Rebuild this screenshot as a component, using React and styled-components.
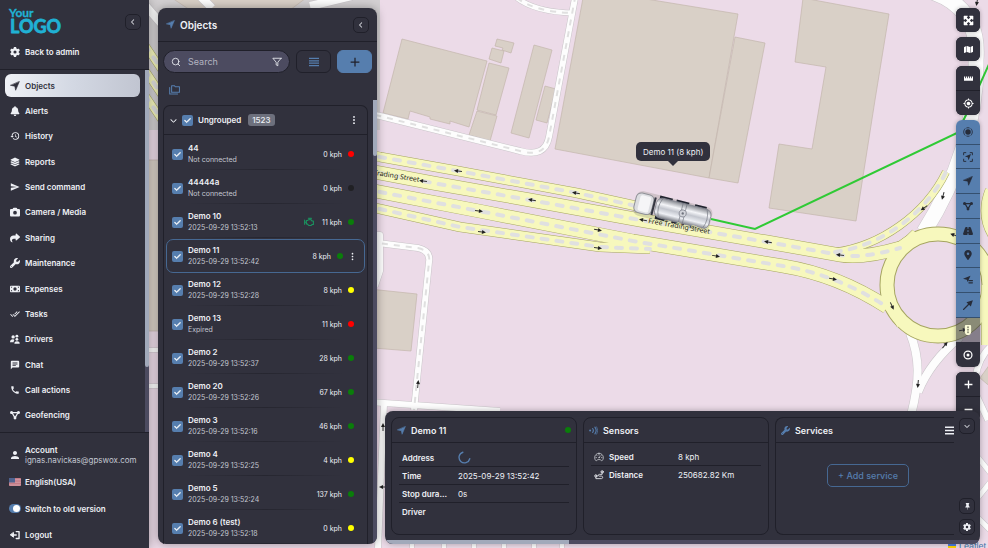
import React from "react";
import styled, { createGlobalStyle, css } from "styled-components";
import {
  FaBell, FaCamera, FaChevronDown, FaChevronLeft, FaCheck, FaGear, FaLayerGroup,
  FaLocationDot, FaMap, FaMaximize, FaMoneyBill, FaRoad, FaShare,
  FaTrafficLight, FaWrench,
} from "react-icons/fa6";
import { MdChat, MdDoneAll, MdHistory, MdMyLocation, MdPerson, MdSend, MdCall } from "react-icons/md";
import { FiFilter, FiSearch } from "react-icons/fi";
import { BsPinFill, BsThreeDotsVertical } from "react-icons/bs";
import { IoSpeedometerOutline } from "react-icons/io5";

const c = {
  panel: "#31313d",
  line: "#20202a",
  blue: "#567eae",
  field: "#4c4b60",
  text: "#eef0f5",
  soft: "#c3c7d1",
  thumb: "#a1a9ba",
};

const Global = createGlobalStyle`
  * { box-sizing: border-box; }
  body { margin: 0; font-family: Inter, sans-serif; font-size: 8px; color: ${c.text}; }
  button, input { font: inherit; color: inherit; }
  button { padding: 0; border: 0; background: none; cursor: pointer; }
  h2, p, dl, dd, dt, ul { margin: 0; padding: 0; }
  ul { list-style: none; }
  a { color: inherit; text-decoration: none; }
  svg { display: block; flex: none; }
`;

/* ---------- small drawings ---------- */

const Icon = ({ size = 10, children, box = 16 }) => (
  <svg width={size} height={size} viewBox={`0 0 ${box} ${box}`} fill="none" stroke="currentColor" strokeWidth="1.6" strokeLinecap="round" strokeLinejoin="round" aria-hidden="true">
    {children}
  </svg>
);

const CompassArrow = (p) => (
  <Icon {...p}><path fill="currentColor" strokeWidth="1" d="M14.800 1.200 9 14.800 7.700 8.300 1.200 7z" /></Icon>
);
const GeofenceIcon = (p) => (
  <Icon {...p}>
    <path strokeWidth="2" d="M3 4h10L8 12.500z" />
    <g fill="currentColor" stroke="none">
      <circle cx="2.500" cy="4" r="2.500" /><circle cx="13.500" cy="4" r="2.500" /><circle cx="8" cy="12.800" r="2.300" />
    </g>
  </Icon>
);
const DriversIcon = (p) => (
  <Icon {...p}>
    <g fill="currentColor" stroke="none">
      <circle cx="5" cy="4.600" r="2.700" /><circle cx="11" cy="3.400" r="2.300" />
      <path d="M0 13c0-3 2-4.600 4.500-4.600 1.300 0 2 .4 2.600 1-1 1-1.300 2.200-1.300 3.600z" />
      <circle cx="11" cy="8.500" r="2.200" /><path d="M7 15.500c0-3 1.700-4 4.200-4s4.300 1 4.300 4z" />
    </g>
  </Icon>
);
const LogoutIcon = (p) => (
  <Icon {...p}>
    <path strokeWidth="2.200" d="M10 2.500h4.500v11H10M10 8H2" />
    <path fill="currentColor" d="M5.500 4.500v7L1 8z" />
  </Icon>
);
const FoldersIcon = (p) => (
  <Icon {...p}>
    <path strokeWidth="1.500" d="M3.800 2.500h4l1.500 1.600h5.900v8H3.800zM1 5v9.500h11.500" />
  </Icon>
);
const EngineIcon = (p) => (
  <Icon {...p}>
    <path strokeWidth="1.700" d="M1 5v6.500M1 8.300h2.800M3.800 5.500h2L7 4.500h4.500L13 6.500h2v5.500h-2l-1.500 1.500H7.500L5 11H3.800zM7 2h5M9.500 2v2.500" />
  </Icon>
);
const WavesIcon = (p) => (
  <Icon {...p}>
    <circle cx="2" cy="8" r="1.800" fill="currentColor" stroke="none" />
    <path strokeWidth="2" d="M6.500 4.500c1.600 2.300 1.600 4.700 0 7M10.500 2c3 4 3 8 0 12" /><path strokeWidth="1.200" d="M13.500 1.500c2.500 4.300 2.500 8.700 0 13" />
  </Icon>
);
const DistanceIcon = (p) => (
  <Icon {...p}>
    <circle cx="13" cy="3" r="1.800" /><circle cx="3" cy="9.500" r="1.800" />
    <path strokeWidth="1.300" d="M13 5v2H8.500c-2 0-2 2.800 0 2.800H12c2.500 0 2.500 4 0 4H3v-2" />
  </Icon>
);
const LinesIcon = ({ rows = 4, ...p }) => (
  <Icon {...p}>
    {Array.from({ length: rows }, (_, i) => (
      <path key={i} strokeLinecap="butt" strokeWidth={rows === 3 ? 2.4 : 1.9} d={`M0 ${2.2 + (i * 11.6) / (rows - 1)}h16`} />
    ))}
  </Icon>
);
const RulerIcon = (p) => (
  <Icon {...p}>
    <path fill="currentColor" stroke="none" d="M0 4.500h2v3h1.400v-3h2v3h1.400v-3h2.400v3h1.400v-3h2v3H14v-3h2V12H0z" />
  </Icon>
);
const PulseIcon = (p) => (
  <Icon {...p}>
    <circle cx="8" cy="8" r="4.400" fill="currentColor" stroke="none" />
    <path d="M3.200 2.800c-2.900 3-2.900 7.400 0 10.400M12.800 2.800c2.900 3 2.900 7.400 0 10.400M6 1.400c1.200-.4 2.800-.4 4 0M6 14.600c1.200.4 2.800.4 4 0" strokeWidth="1.400" />
  </Icon>
);
const FocusIcon = (p) => (
  <Icon {...p}>
    <path strokeWidth="1.500" d="M1 4.500V1h3.500M11.500 1H15v3.500M15 11.500V15h-3.500M4.500 15H1v-3.500" />
    <path fill="currentColor" stroke="none" d="M12.800 3.200 9 13 7.500 8.500 3 7.300z" />
  </Icon>
);
const ArrowListIcon = (p) => (
  <Icon {...p}>
    <path fill="currentColor" stroke="none" d="M12 1 7.500 11 6 7.500 0 6z" />
    <path d="M9.500 9H15M9.500 12.500H15" strokeWidth="2" />
  </Icon>
);
const LongArrowIcon = (p) => (
  <Icon {...p}>
    <path strokeWidth="2.200" d="M1 15 10 6" /><path fill="currentColor" stroke="none" d="M15.800.2 12.500 10.500 5.500 3.500z" />
  </Icon>
);
const TargetIcon = (p) => (
  <Icon {...p}><circle cx="8" cy="8" r="6.300" strokeWidth="2" /><circle cx="8" cy="8" r="2.400" fill="currentColor" stroke="none" /></Icon>
);
const PlusIcon = ({ weight = 2, ...p }) => <Icon {...p}><path strokeLinecap="butt" strokeWidth={weight} d="M8 1v14M1 8h14" /></Icon>;
const MinusIcon = (p) => <Icon {...p}><path strokeLinecap="butt" strokeWidth="2.400" d="M1 8h14" /></Icon>;
const SpinnerIcon = (p) => <Icon {...p}><path stroke={c.blue} strokeWidth="1.700" d="M6 1.500A6.700 6.700 0 1 0 14.500 9.500" /></Icon>;

const Flag = () => (
  <svg width="12" height="8" viewBox="0 0 12 8" aria-hidden="true">
    <rect width="12" height="8" rx="1" fill="#d8a7b0" />
    <path d="M0 .6h12M0 2.200h12M0 3.800h12M0 5.400h12M0 7h12" stroke="#b9626f" strokeWidth=".7" />
    <rect width="6" height="4.500" fill="#4f6390" />
  </svg>
);

const LogoSvg = styled.svg`overflow: visible;`;
const Logo = () => (
  <LogoSvg width="56" height="28" viewBox="0 0 56 28" role="img" aria-label="Your Logo">
    <g fill="#20b1d4" stroke="#20b1d4" strokeLinejoin="round" fontFamily="Lato, sans-serif" fontWeight="700">
      <text x="1" y="9" fontSize="12" strokeWidth=".3">Your</text>
      <text x="2" y="25" fontSize="18" strokeWidth=".8">LOGO</text>
    </g>
  </LogoSvg>
);

/* ---------- map ---------- */

const MapSvg = styled.svg`
  position: absolute;
  inset: 0;
  width: 100%;
  height: 100%;
  background: #ecdbe8;
`;

const buildings = [
  "402,39 487,61 469,127 450,121 450,124 430,119 430,117 410,111 408,119 383,113",
  "489,63 509,68 496,115 477,110",
  "477,111 497,116 490,141 469,135",
  "497,39 514,43 511,53 502,50 503,48 495,46",
  "492,48 504,51 501,63 489,59",
  "534,45 552,50 529,138 511,133",
  "545,86 556,89 547,123 536,120",
  "583,-2 640,-2 738,14 709,178 555,149",
  "735,37 765,43 738,183 709,178",
  "803,-2 889,14 875,100 856,221 769,208 779,144 812,149 826,67 795,62",
  "360,288 417,294 411,351 360,347",
  "140,160 160,160 160,331 140,331",
  "172,-2 306,-2 290,10 190,10",
  "1000,350 980,378 1000,395",
];
const whiteRoads = [
  ["M340 108 380 116 520 151Q545 158 549 137L575-2", 6],
  ["M517-2Q535 12 573 13", 5],
  ["M370 242 418 248Q431 251 429 262L414 410", 6],
  ["M377 235h3v36l-5 15", 6],
  ["M370 402 500 411", 6],
  ["M384 404 378 548", 6],
  ["M910 333C920 358 920 380 911 415", 8],
  ["M960 337Q930 362 918 392", 8],
  ["M932-8Q980 8 976 60C977 120 957 180 924 232", 15],
  ["M1000 340Q976 352 974 390L988 420", 6],
  ["M976 455 1000 485M976 500 1000 470M970 510 1000 540", 5],
  ["M145 5 165 28M200-4 212 8M310 6 352-4", 8],
  ["M145 350h14M145 386h14", 4],
  ["M412 542v8M444 542v8M474 542v8M504 542v8M534 542v8M562 542v8", 4],
];
const yellowRoads = [
  ["M145 45 165 75M145 70 165 100M145 95 165 125", 7, true],
  ["M350 203 380 209 460 227 600 247 650 249", 9, true],
  ["M350 186 380 192 479 211 633 241 783 266Q838 275 887 307", 13, true],
  ["M350 150 380 157 458 171 577 193 650 209", 9, true],
  ["M835 252C880 246 925 215 946 172", 7, true],
  ["M350 168 380 173 433 183 530 200 640 220 767 242 840 255Q862 259 900 248", 13, true],
  ["M990 190Q978 220 1000 245", 9, false],
  ["M880 253Q903 246 915 232", 6, false],
  ["M883 302Q893 310 901 325", 8, false],
];
const arrows = [
  [458, 171, 186], [576, 193, 190], [423, 181, 188], [643, 220, 190], [768, 242, 190], [840, 255, 186],
  [479, 211, 8], [532, 200, 190], [598, 230, 10], [482, 232, 8], [598, 248, 6], [716, 256, 9], [833, 279, 10],
  [924, 208, 145], [943, 196, 105], [954, 235, 200], [892, 306, 65], [918, 384, 95], [945, 345, -50],
  [383, 427, 270], [418, 384, 275], [383, 487, 180], [977, 2, 100], [963, 330, -10],
];

const Building = styled.polygon`fill: #d9d0c7; stroke: #c3b6ac; stroke-width: 0.7;`;
const Road = styled.path`fill: none; stroke: ${(p) => p.$tone}; stroke-width: ${(p) => p.$w}; stroke-linejoin: round;`;
const Dashes = styled.path`
  fill: none;
  stroke: #e0e0e0;
  stroke-width: ${(p) => p.$w};
  stroke-dasharray: ${(p) => (p.$w > 3 ? "6 9" : "6 6")};
  stroke-linecap: ${(p) => (p.$w > 3 ? "round" : "butt")};
`;
const StreetName = styled.text`font: 7px "Noto Sans", sans-serif; fill: #222; stroke: #f7f8bd; stroke-width: 1; paint-order: stroke;`;

const Truck = () => (
  <g transform="translate(673 211) rotate(14)">
    <defs>
      <linearGradient id="tank" x1="0" y1="0" x2="0" y2="1">
        <stop offset="0" stopColor="#85888f" /><stop offset=".3" stopColor="#f4f5f8" />
        <stop offset=".5" stopColor="#c3c6ce" /><stop offset=".75" stopColor="#eef0f5" /><stop offset="1" stopColor="#7a7d85" />
      </linearGradient>
    </defs>
    <rect x="-39" y="-12" width="78" height="25" rx="6" fill="#776" opacity=".25" />
    <rect x="-39" y="-10" width="18" height="20" rx="5" fill="#dcdde1" stroke="#8f9197" />
    <rect x="-35" y="-8" width="11" height="16" rx="2" fill="#f5f5f7" />
    <path d="M-20-9v18" stroke="#333641" strokeWidth="2" />
    <path d="M-16-10.500h13M1-10.500h13M20-10.500h12M-16 10.500h13M1 10.500h13M20 10.500h12" stroke="#20232e" strokeWidth="3" />
    <rect x="-18" y="-10" width="56" height="20" rx="6" fill="url(#tank)" stroke="#858892" strokeWidth=".8" />
    <path d="M-13-9q-4 9 0 18M8-10v20M12-10v20M33-9q4 9 0 18" fill="none" stroke="#70737e" strokeWidth=".6" />
    <circle cx="10" cy="0" r="3.500" fill="#d2d4da" stroke="#7f828d" strokeWidth=".8" /><circle cx="10" cy="0" r="1.200" fill="#70737e" />
  </g>
);

const MapCanvas = () => (
  <MapSvg role="img" aria-label="Map">
    <rect x="140" y="0" width="240" height="130" fill="#d3d0d2" />
    {buildings.map((b) => <Building key={b} points={b} />)}
    {whiteRoads.map(([d, w]) => <Road key={d} d={d} $w={w + 1} $tone="#c9c5c9" />)}
    {whiteRoads.map(([d, w]) => <Road key={d} d={d} $w={w} $tone="#fdfdfd" />)}
    {whiteRoads.slice(0, 3).map(([d]) => <Dashes key={d} d={d} $w={2} />)}
    {yellowRoads.map(([d, w]) => <Road key={d} d={d} $w={w + 1} $tone="#a5a560" />)}
    <circle cx="938" cy="285" r="51" fill="none" stroke="#a5a560" strokeWidth="15" />
    <Road d="M988 285V345" $w={14} $tone="#a5a560" />
    <Road d="M988 285V345" $w={13} $tone="#f7f8bd" />
    {yellowRoads.map(([d, w]) => <Road key={d} d={d} $w={w} $tone="#f7f8bd" />)}
    <circle cx="938" cy="285" r="51" fill="none" stroke="#f7f8bd" strokeWidth="13" />
    {yellowRoads.filter((r) => r[2]).map(([d]) => <Dashes key={d} d={d} $w={4} />)}
    {arrows.map(([x, y, a]) => (
      <g key={`${x}-${y}`} transform={`translate(${x} ${y}) rotate(${a})`}>
        <path d="M-4 0H2" stroke="#333" strokeWidth="1" /><path d="M4 0 0-2v4z" fill="#222" />
      </g>
    ))}
    <StreetName transform="translate(419 182) rotate(9)" textAnchor="end">Free Trading Street</StreetName>
    <path d="M711 219 755 229 957 133 966 115 990 62" fill="none" stroke="#2fca35" strokeWidth="2" />
    <Truck />
    <StreetName transform="translate(648 223) rotate(10)">Free Trading Street</StreetName>
  </MapSvg>
);

const Marker = styled.div`
  position: absolute;
  left: 636px;
  top: 142px;
  height: 19px;
  padding: 0 7px;
  display: grid;
  place-items: center;
  border-radius: 5px;
  background: ${c.panel};
  font-size: 8px;
  white-space: nowrap;
  &::after {
    content: "";
    position: absolute;
    top: 100%;
    left: 50%;
    border: 5px solid transparent;
    border-top-color: ${c.panel};
    border-bottom: 0;
    transform: translateX(-50%);
  }
`;
const Attribution = styled.a`
  position: absolute;
  right: 2px;
  bottom: -4px;
  display: flex;
  align-items: center;
  gap: 3px;
  color: #3d76a8;
  font: 9px/11px "Liberation Sans", sans-serif;
  &::before { content: ""; width: 8px; height: 7px; background: linear-gradient(#4c7be1 50%, #ffd500 50%); }
`;

/* ---------- shell ---------- */

const Shell = styled.div`
  position: relative;
  height: 100vh;
  overflow: hidden;
  display: flex;
`;
const Workspace = styled.main`
  position: relative;
  flex: 1;
  min-width: 0;
  display: flex;
  gap: 8px;
  padding: 8px 8px 4px 9px;
`;
const RightSide = styled.div`
  flex: 1;
  min-width: 0;
  display: flex;
  flex-direction: column;
`;

/* ---------- sidebar ---------- */

const Sidebar = styled.aside`
  position: relative;
  width: 149px;
  flex: none;
  display: flex;
  flex-direction: column;
  background: ${c.panel};
  box-shadow: 0 0 10px rgba(0, 0, 0, 0.35);
  font-weight: 600;
`;
const SidebarHead = styled.header`
  height: 70px;
  padding: 8px 8px 0;
  border-bottom: 1px solid ${c.line};
`;
const LogoRow = styled.div`display: flex; justify-content: space-between; align-items: center;`;
const OutlineButton = styled.button`
  width: 16px;
  height: 16px;
  display: grid;
  place-items: center;
  border: 1px solid ${c.line};
  border-radius: 5px;
  color: ${c.text};
`;
const NavLink = styled.a`
  display: flex;
  align-items: center;
  gap: 5px;
  height: 23px;
  padding: 0 5px;
  border-radius: 6px;
  white-space: nowrap;
  svg { width: 10px; height: 10px; }
  ${(p) => p.$active && css`
    color: ${c.panel};
    background: linear-gradient(90deg, #eff1f6, #d3d8e3 50%, #c1c5d1);
  `}
`;
const HeadLink = styled(NavLink)`margin: 4px 0 0; padding: 0 2px;`;
const NavArea = styled.div`flex: 1; min-height: 0; display: flex;`;
const NavList = styled.ul`
  flex: 1;
  display: grid;
  grid-auto-rows: minmax(23px, 1fr);
  align-items: center;
  padding: 3px 5px 4px;
  overflow: hidden;
`;
const ScrollTrack = styled.div`width: 4px; background: ${c.field};`;
const ScrollThumb = styled.div`height: ${(p) => p.$size}; background: ${c.thumb}; border-radius: 0 0 2px 2px;`;
const SidebarFoot = styled.footer`
  padding: 9px 9px 0;
  border-top: 1px solid ${c.line};
  display: flex;
  flex-direction: column;
`;
const FootLink = styled.a`
  display: flex;
  align-items: center;
  gap: 4px;
  height: ${(p) => p.$h};
  > :first-child { width: 12px; }
`;
const Email = styled.span`display: block; font-weight: 400; color: ${c.soft};`;
const Stack = styled.span`display: block; line-height: 10px;`;
const SwitchLabel = styled(FootLink).attrs({ as: "label" })``;
const Toggle = styled.input.attrs({ type: "checkbox", role: "switch" })`
  appearance: none;
  width: 13px;
  height: 9px;
  margin: 0;
  padding: 1px;
  border-radius: 5px;
  background: ${c.blue};
  display: flex;
  justify-content: flex-end;
  &::before { content: ""; width: 7px; height: 7px; border-radius: 50%; background: #fff; }
`;

const navItems = [
  ["Objects", <CompassArrow />], ["Alerts", <FaBell />], ["History", <MdHistory />],
  ["Reports", <FaLayerGroup />], ["Send command", <MdSend />], ["Camera / Media", <FaCamera />],
  ["Sharing", <FaShare />], ["Maintenance", <FaWrench />], ["Expenses", <FaMoneyBill />],
  ["Tasks", <MdDoneAll />], ["Drivers", <DriversIcon />], ["Chat", <MdChat />],
  ["Call actions", <MdCall />], ["Geofencing", <GeofenceIcon />],
];

const SideNav = () => (
  <Sidebar>
    <SidebarHead>
      <LogoRow>
        <Logo />
        <OutlineButton aria-label="Collapse menu"><FaChevronLeft size={6} /></OutlineButton>
      </LogoRow>
      <HeadLink href="#admin"><FaGear />Back to admin</HeadLink>
    </SidebarHead>
    <NavArea>
      <NavList>
        {navItems.map(([name, icon], i) => (
          <li key={name}><NavLink href="#" $active={i === 0}>{icon}{name}</NavLink></li>
        ))}
      </NavList>
      <ScrollTrack><ScrollThumb $size="82%" /></ScrollTrack>
    </NavArea>
    <SidebarFoot>
      <FootLink href="#account" $h="26px"><MdPerson size={12} /><Stack>Account<Email>ignas.navickas@gpswox.com</Email></Stack></FootLink>
      <FootLink href="#language" $h="27px"><Flag />English(USA)</FootLink>
      <SwitchLabel $h="27px"><Toggle defaultChecked />Switch to old version</SwitchLabel>
      <FootLink href="#logout" $h="26px"><LogoutIcon size={10} />Logout</FootLink>
    </SidebarFoot>
  </Sidebar>
);

/* ---------- objects panel ---------- */

const Panel = styled.section`
  width: 219px;
  flex: none;
  display: flex;
  flex-direction: column;
  overflow: hidden;
  border-radius: 8px;
  background: ${c.panel};
  box-shadow: 0 0 10px rgba(0, 0, 0, 0.35);
`;
const PanelHead = styled.header`
  height: 34px;
  flex: none;
  display: flex;
  align-items: center;
  gap: 5px;
  padding: 0 8px;
  border-bottom: 1px solid ${c.line};
  > svg { color: ${c.blue}; }
  > button { margin-left: auto; }
`;
const Title = styled.h2`font-size: ${(p) => p.$size}; font-weight: 600;`;
const Tools = styled.div`display: flex; gap: 6px; padding: 8px 5px 0;`;
const SearchBox = styled.label`
  flex: 1;
  min-width: 0;
  display: flex;
  align-items: center;
  gap: 7px;
  height: 23px;
  padding: 0 7px;
  border: 1px solid ${c.line};
  border-radius: 12px;
  background: ${c.field};
`;
const SearchInput = styled.input`
  flex: 1;
  min-width: 0;
  padding: 0;
  border: 0;
  outline: 0;
  background: none;
  font-size: 9px;
  &::placeholder { color: #b3b4c2; }
`;
const ToolButton = styled.button`
  width: 35px;
  height: 23px;
  display: grid;
  place-items: center;
  border-radius: 6px;
  border: 1px solid ${(p) => (p.$solid ? c.blue : c.line)};
  background: ${(p) => (p.$solid ? c.blue : "none")};
  color: ${(p) => (p.$solid ? c.line : c.blue)};
`;
const PlainButton = styled.button`display: grid; place-items: center; color: ${(p) => p.$tone || c.text};`;
const FolderRow = styled.div`height: 27px; flex: none; padding: 5px 11px 0; display: flex; align-items: center;`;
const ListArea = styled.div`flex: 1; min-height: 0; display: flex; gap: 5px; padding-left: 5px;`;
const Group = styled.div`
  flex: 1;
  min-width: 0;
  margin-top: 5px;
  border: 1px solid ${c.line};
  border-bottom: 0;
  border-radius: 7px 7px 0 0;
  overflow: hidden;
`;
const GroupHead = styled.div`
  height: 29px;
  display: flex;
  align-items: center;
  gap: 5px;
  padding: 0 8px 0 6px;
  border-bottom: 1px solid ${c.line};
  font-weight: 600;
  > :last-child { margin-left: auto; }
`;
const Count = styled.span`
  margin-left: 2px;
  padding: 0 4px;
  border-radius: 3px;
  background: #6d707d;
  font-weight: 500;
  line-height: 12px;
`;
const CheckWrap = styled.span`display: grid; place-items: center; > * { grid-area: 1 / 1; } svg { pointer-events: none; }`;
const CheckInput = styled.input.attrs({ type: "checkbox" })`
  appearance: none;
  width: 11px;
  height: 11px;
  margin: 0;
  border-radius: 2px;
  background: ${c.blue};
`;
const Check = ({ label }) => (
  <CheckWrap><CheckInput defaultChecked aria-label={label} /><FaCheck size={7} color="#fff" stroke="#fff" strokeWidth="40" /></CheckWrap>
);
const ObjectList = styled.ul`padding-top: 2px;`;
const ObjectRow = styled.li`
  height: 34px;
  margin: 0 2px;
  padding: 0 ${(p) => (p.$active ? "7px" : "10px")} 0 5px;
  display: flex;
  align-items: center;
  gap: 5px;
  border: 1px solid ${(p) => (p.$active ? "#466892" : "transparent")};
  border-radius: 7px;
  background: ${(p) => (p.$active ? "none" : "linear-gradient(90deg, transparent 10%, #262630 50%, transparent 90%) bottom / 100% 1px no-repeat")};
`;
const ObjectText = styled.div`flex: 1; min-width: 0;`;
const ObjectName = styled.p`font-weight: 600; line-height: 11px;`;
const ObjectSub = styled.p`font-size: 7px; line-height: 11px; color: ${c.soft};`;
const Speed = styled.span`font-size: 7px; padding: 0 1px 0 3px;`;
const Dot = styled.span`width: 6px; height: 6px; border-radius: 50%; background: ${(p) => p.$tone};`;

const objects = [
  ["44", "Not connected", "0 kph", "#ff0000"],
  ["44444a", "Not connected", "0 kph", "#202024"],
  ["Demo 10", "2025-09-29 13:52:13", "11 kph", "#0a7d0a"],
  ["Demo 11", "2025-09-29 13:52:42", "8 kph", "#0a7d0a"],
  ["Demo 12", "2025-09-29 13:52:28", "8 kph", "#ffff00"],
  ["Demo 13", "Expired", "11 kph", "#ff0000"],
  ["Demo 2", "2025-09-29 13:52:37", "28 kph", "#0a7d0a"],
  ["Demo 20", "2025-09-29 13:52:26", "67 kph", "#0a7d0a"],
  ["Demo 3", "2025-09-29 13:52:16", "46 kph", "#0a7d0a"],
  ["Demo 4", "2025-09-29 13:52:25", "4 kph", "#ffff00"],
  ["Demo 5", "2025-09-29 13:52:24", "137 kph", "#0a7d0a"],
  ["Demo 6 (test)", "2025-09-29 13:52:18", "0 kph", "#ffff00"],
];

const ObjectsPanel = () => (
  <Panel>
    <PanelHead>
      <CompassArrow size={9} />
      <Title $size="10px">Objects</Title>
      <OutlineButton aria-label="Collapse objects"><FaChevronLeft size={6} /></OutlineButton>
    </PanelHead>
    <Tools>
      <SearchBox>
        <FiSearch size={10} />
        <SearchInput aria-label="Search" placeholder="Search" />
        <FiFilter size={10} />
      </SearchBox>
      <ToolButton aria-label="List view"><LinesIcon size={10} /></ToolButton>
      <ToolButton $solid aria-label="Add object"><PlusIcon size={10} /></ToolButton>
    </Tools>
    <FolderRow><PlainButton $tone={c.blue} aria-label="Folders"><FoldersIcon size={11} /></PlainButton></FolderRow>
    <ListArea>
      <Group>
        <GroupHead>
          <PlainButton aria-label="Toggle group"><FaChevronDown size={7} /></PlainButton>
          <Check label="Ungrouped" />
          Ungrouped
          <Count>1523</Count>
          <PlainButton aria-label="Group menu"><BsThreeDotsVertical size={10} /></PlainButton>
        </GroupHead>
        <ObjectList>
          {objects.map(([name, sub, speed, tone]) => {
            const active = name === "Demo 11";
            return (
              <ObjectRow key={name} $active={active}>
                <Check label={name} />
                <ObjectText><ObjectName>{name}</ObjectName><ObjectSub>{sub}</ObjectSub></ObjectText>
                {name === "Demo 10" && <PlainButton $tone="#1a9560" aria-label="Engine on"><EngineIcon size={10} /></PlainButton>}
                <Speed>{speed}</Speed>
                <Dot $tone={tone} />
                {active && <PlainButton aria-label="Object menu"><BsThreeDotsVertical size={9} /></PlainButton>}
              </ObjectRow>
            );
          })}
        </ObjectList>
      </Group>
      <ScrollTrack><ScrollThumb $size="56px" /></ScrollTrack>
    </ListArea>
  </Panel>
);

/* ---------- map toolbar ---------- */

const Toolbar = styled.nav`
  flex: 1;
  width: 24px;
  min-height: 0;
  margin: 0 0 -10px auto;
  display: flex;
  flex-direction: column;
  gap: 5px;
`;
const ToolGroup = styled.div`
  flex: ${(p) => (p.$grow ? "1" : "none")};
  display: grid;
  grid-auto-rows: ${(p) => (p.$grow ? "1fr" : "24px")};
  gap: ${(p) => (p.$grow ? "0" : "1px")};
  border-radius: 6px;
  overflow: hidden;
  background: ${(p) => (p.$grow ? "none" : c.line)};
  box-shadow: 0 0 4px rgba(0, 0, 0, 0.3);
`;
const tones = {
  dark: css`background: ${c.panel}; color: #fff;`,
  blue: css`background: ${c.blue}; color: #262c3a; border-bottom: 1px solid #35506f;`,
  clear: css`background: rgba(49, 49, 61, 0.55); color: #fbfbd8;`,
};
const MapTool = styled.button`display: grid; place-items: center; ${(p) => tones[p.$tone || "dark"]}`;

const layerTools = [
  ["Live", <PulseIcon size={10} />], ["Fit objects", <FocusIcon size={10} />], ["Objects", <CompassArrow size={10} />],
  ["Geofences", <GeofenceIcon size={10} />], ["Routes", <FaRoad size={10} />], ["Places", <FaLocationDot size={10} />],
  ["Object labels", <ArrowListIcon size={10} />], ["Tails", <LongArrowIcon size={10} />],
];

const MapTools = () => (
  <Toolbar aria-label="Map tools">
    <ToolGroup><MapTool aria-label="Fullscreen"><FaMaximize size={11} /></MapTool></ToolGroup>
    <ToolGroup><MapTool aria-label="Map layers"><FaMap size={9} /></MapTool></ToolGroup>
    <ToolGroup>
      <MapTool aria-label="Ruler"><RulerIcon size={9} /></MapTool>
      <MapTool aria-label="My location"><MdMyLocation size={11} /></MapTool>
    </ToolGroup>
    <ToolGroup $grow>
      {layerTools.map(([name, icon]) => <MapTool key={name} $tone="blue" aria-label={name}>{icon}</MapTool>)}
      <MapTool $tone="clear" aria-label="Traffic"><FaTrafficLight size={10} /></MapTool>
      <MapTool aria-label="Center"><TargetIcon size={10} /></MapTool>
    </ToolGroup>
    <ToolGroup>
      <MapTool aria-label="Zoom in"><PlusIcon size={9} weight={2.400} /></MapTool>
      <MapTool aria-label="Zoom out"><MinusIcon size={9} /></MapTool>
    </ToolGroup>
  </Toolbar>
);

/* ---------- bottom widgets ---------- */

const Dock = styled.section`
  position: relative;
  height: 133px;
  flex: none;
  display: flex;
  flex-direction: column;
  overflow: hidden;
  border-radius: 8px;
  background: ${c.panel};
  box-shadow: 0 0 6px rgba(0, 0, 0, 0.3);
`;
const DockBody = styled.div`flex: 1; min-height: 0; display: flex; padding: 6px 0 5px 6px;`;
const Cards = styled.div`flex: 1; min-width: 0; display: flex; gap: 6px; overflow: hidden;`;
const Card = styled.article`
  width: 186px;
  flex: none;
  border: 1px solid ${c.line};
  border-radius: 8px;
  &:last-child { flex: 1; min-width: 0; border-right: 0; border-radius: 8px 0 0 8px; }
`;
const CardHead = styled.header`
  height: 25px;
  display: flex;
  align-items: center;
  gap: 5px;
  padding: 0 5px;
  border-bottom: 1px solid ${c.line};
  > svg:first-child { color: ${c.blue}; }
  > span, > button { margin-left: auto; }
`;
const ServicesHead = styled(CardHead)`padding-right: 0;`;
const Details = styled.dl`padding: ${(p) => p.$pad};`;
const DetailRow = styled.div`
  height: 18px;
  display: grid;
  grid-template-columns: ${(p) => p.$cols};
  align-items: center;
  padding: 0 3px;
  &:not(:last-child) { border-bottom: 1px solid ${c.line}; }
`;
const Term = styled.dt`
  display: flex;
  align-items: center;
  gap: 5px;
  font-weight: 600;
`;
const Value = styled.dd`white-space: nowrap;`;
const CardBody = styled.div`padding: 21px 0 0 51px;`;
const AddButton = styled.button`
  height: 23px;
  width: 82px;
  border: 1px solid #466892;
  border-radius: 5px;
  color: ${c.blue};
  font-size: 9px;
  font-weight: 500;
`;
const DockSide = styled.div`width: 26px; display: flex; flex-direction: column; align-items: center; gap: 5px; padding-top: 1px;`;
const Spacer = styled.div`flex: 1;`;
const DockTrack = styled.div`height: 4px; background: ${c.field};`;
const DockThumb = styled.div`width: 31%; height: 4px; background: ${c.thumb};`;

const WidgetDock = () => (
  <Dock>
    <DockBody>
      <Cards>
        <Card>
          <CardHead><CompassArrow size={9} /><Title $size="9px">Demo 11</Title><Dot $tone="#0a7d0a" /></CardHead>
          <Details $pad="6px 7px">
            <DetailRow $cols="56px 1fr"><Term>Address</Term><Value><SpinnerIcon size={13} /></Value></DetailRow>
            <DetailRow $cols="56px 1fr"><Term>Time</Term><Value>2025-09-29 13:52:42</Value></DetailRow>
            <DetailRow $cols="56px 1fr"><Term>Stop dura...</Term><Value>0s</Value></DetailRow>
            <DetailRow $cols="56px 1fr"><Term>Driver</Term><Value /></DetailRow>
          </Details>
        </Card>
        <Card>
          <CardHead><WavesIcon size={9} /><Title $size="9px">Sensors</Title></CardHead>
          <Details $pad="5px 7px">
            <DetailRow $cols="84px 1fr"><Term><IoSpeedometerOutline size={10} />Speed</Term><Value>8 kph</Value></DetailRow>
            <DetailRow $cols="84px 1fr"><Term><DistanceIcon size={10} />Distance</Term><Value>250682.82 Km</Value></DetailRow>
          </Details>
        </Card>
        <Card>
          <ServicesHead>
            <FaWrench size={9} /><Title $size="9px">Services</Title>
            <PlainButton aria-label="Services menu"><LinesIcon rows={3} size={9} /></PlainButton>
          </ServicesHead>
          <CardBody><AddButton>+ Add service</AddButton></CardBody>
        </Card>
      </Cards>
      <DockSide>
        <OutlineButton aria-label="Collapse widgets"><FaChevronDown size={6} /></OutlineButton>
        <Spacer />
        <OutlineButton aria-label="Pin widgets"><BsPinFill size={7} /></OutlineButton>
        <OutlineButton aria-label="Widget settings"><FaGear size={8} /></OutlineButton>
      </DockSide>
    </DockBody>
    <DockTrack><DockThumb /></DockTrack>
  </Dock>
);

export default function App() {
  return (
    <>
      <Global />
      <Shell>
        <MapCanvas />
        <Marker>Demo 11 (8 kph)</Marker>
        <Attribution href="#leaflet">Leaflet</Attribution>
        <SideNav />
        <Workspace>
          <ObjectsPanel />
          <RightSide>
            <MapTools />
            <WidgetDock />
          </RightSide>
        </Workspace>
      </Shell>
    </>
  );
}
